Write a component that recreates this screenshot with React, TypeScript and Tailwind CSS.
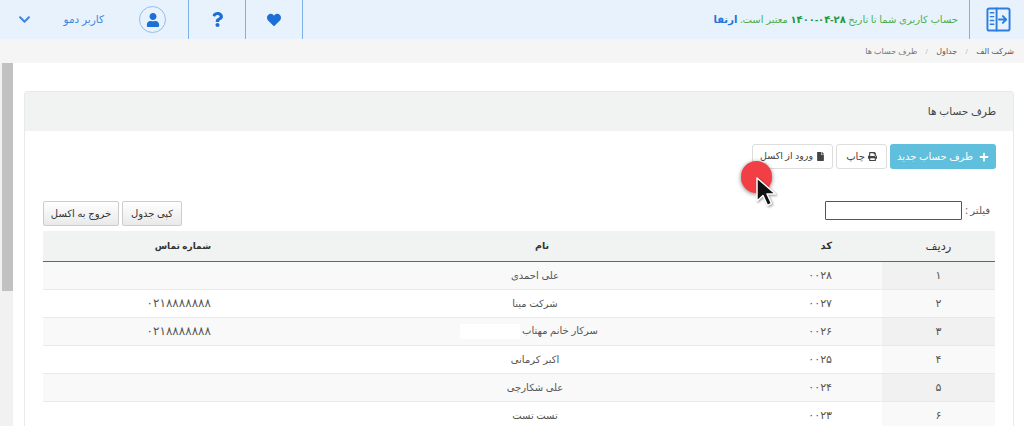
import React from "react";
import { FaHeart, FaQuestion, FaUser, FaPlus, FaPrint, FaFile, FaChevronDown } from "react-icons/fa";

const rows = [
  ["۱", "۰۰۲۸", "علی احمدی", ""],
  ["۲", "۰۰۲۷", "شرکت مینا", "۰۲۱۸۸۸۸۸۸۸"],
  ["۳", "۰۰۲۶", "سرکار خانم مهتاب", "۰۲۱۸۸۸۸۸۸۸"],
  ["۴", "۰۰۲۵", "اکبر کرمانی", ""],
  ["۵", "۰۰۲۴", "علی شکارچی", ""],
  ["۶", "۰۰۲۳", "تست تست", ""],
];

function Logo() {
  return (
    <svg width="25" height="25" viewBox="0 0 26 26" fill="none" stroke="#2b7de0" strokeWidth="2" strokeLinejoin="round" strokeLinecap="round">
      <rect x="1.5" y="1.5" width="23" height="23" rx="2" />
      <path d="M11 1.5v23" />
      <path d="M4.5 6h3.5M4.5 10h3.5M4.5 14h3.5M4.5 18h3.5" strokeWidth="1.5" />
      <path d="M13.5 13h7M17.5 9.5l3.5 3.5-3.5 3.5" />
    </svg>
  );
}

export default function App() {
  return (
    <div dir="rtl" className="w-[1024px] h-[426px] overflow-hidden bg-white font-['Open_Sans','DejaVu_Sans',sans-serif] text-[10.5px] text-[#555]">
      <header className="h-[39px] bg-[#e8f2fd] flex items-stretch">
        <div className="w-[55px] flex items-center justify-center border-l-[1.5px] border-[#7fb0ea] shrink-0 pl-[3px]">
          <Logo />
        </div>
        <div className="w-[666px] pr-[11px] flex items-center text-[10px] text-[#4caf50]">
          <span>حساب کاربری شما تا تاریخ <bdi dir="ltr" className="font-bold text-[10px] text-[#1f9a3c]">۱۴۰۰-۰۴-۲۸</bdi> معتبر است. <b className="text-[#2273d8]">ارتقا</b></span>
        </div>
        <div className="w-[57px] flex items-center justify-center border-r-[1.5px] border-[#7fb0ea] text-[#1c6fd6] text-[14px] shrink-0"><FaHeart /></div>
        <div className="w-[57px] flex items-center justify-center border-r-[1.5px] border-[#7fb0ea] text-[#1c6fd6] text-[15px] shrink-0"><FaQuestion /></div>
        <div className="flex-1 flex items-center border-r-[1.5px] border-[#7fb0ea] pr-[22px]">
          <div className="w-[27px] h-[27px] rounded-full border border-[#8fbcf0] flex items-center justify-center text-[#1c6fd6] text-[14px]"><FaUser /></div>
          <span className="mr-[35px] text-[#3f86dc] text-[10.5px]">کاربر دمو</span>
          <FaChevronDown className="mr-[33px] text-[#3f86dc] text-[13px]" />
        </div>
      </header>

      <nav className="h-[24px] bg-[#f5f5f5] flex items-center gap-[8px] pr-[10px] text-[8px] text-[#555]">
        <span>شرکت الف</span>
        <span className="text-[#bbb]">/</span>
        <span>جداول</span>
        <span className="text-[#bbb]">/</span>
        <span className="text-[#777]">طرف حساب ها</span>
      </nav>

      <div className="flex h-[363px]">
        <main className="flex-1 pt-[28px] pr-[10px] pl-[11px]">
          <section className="border border-[#e7eaec] rounded-t-[3px] h-[340px]">
            <div className="h-[39px] bg-[#f1f3f3] flex items-center pr-[17px] text-[10.5px] text-[#444]">طرف حساب ها</div>
            <div className="pt-[13px] px-[18px]">
              <div className="flex gap-[3px] h-[25px] -mr-[1px]">
                <button className="w-[106px] rounded-[3px] bg-[#5fbfdc] text-white flex items-center justify-center gap-[6px] text-[10px]"><FaPlus className="text-[10px]" />طرف حساب جدید</button>
                <button className="w-[51px] rounded-[3px] border border-[#ddd] bg-white flex items-center justify-center gap-[3px] text-[#444] text-[10px]"><FaPrint className="text-[9px]" />چاپ</button>
                <button className="w-[81px] rounded-[3px] border border-[#ddd] bg-white flex items-center justify-center gap-[3px] text-[#444] text-[9.5px]"><FaFile className="text-[9px]" />ورود از اکسل</button>
              </div>
              <div className="flex items-center justify-between mt-[31px] h-[26px]">
                <label className="flex items-center gap-[1px] pr-[5px] text-[10px] mb-[5px]">
                  <span className="w-[27px]">فیلتر :</span>
                  <span className="block w-[137px] h-[19px] border-[1.5px] border-[#555] bg-white rounded-[1px]" />
                </label>
                <div className="flex gap-[3px]">
                  <button className="w-[60px] h-[25px] rounded-[2px] border border-[#ccc] bg-gradient-to-b from-white to-[#e9e9e9] text-[#333] text-[10px]">کپی جدول</button>
                  <button className="w-[76px] h-[25px] rounded-[2px] border border-[#ccc] bg-gradient-to-b from-white to-[#e9e9e9] text-[#333] text-[10px]">خروج به اکسل</button>
                </div>
              </div>
              <table className="w-[952px] table-fixed border-collapse mt-[5px] text-[10px]">
                <colgroup>
                  <col className="w-[113px]" />
                  <col className="w-[172px]" />
                  <col className="w-[350px]" />
                  <col />
                </colgroup>
                <thead>
                  <tr className="h-[30px] bg-[#f1f3f3] border-b border-[#666] text-[#333]">
                    <th className="font-normal text-[11.5px] text-center">ردیف</th>
                    <th className="font-bold text-[10px] text-right pr-[50px]">کد</th>
                    <th className="font-bold text-[9.5px] text-center pl-[14px]">نام</th>
                    <th className="font-bold text-[9px] text-right pr-[149px]">شماره تماس</th>
                  </tr>
                </thead>
                <tbody>
                  {rows.map((r, i) => (
                    <tr key={i} className={i % 2 === 0 ? "h-[28px] bg-[#f9f9f9] border-b border-[#e9e9e9]" : "h-[28px] bg-white border-b border-[#e9e9e9]"}>
                      <td className={i % 2 === 0 ? "text-center text-[11px] bg-[#f1f1f1]" : "text-center text-[11px] bg-[#f9f9f9]"}>{r[0]}</td>
                      <td className="text-right text-[11px] pr-[50px]">{r[1]}</td>
                      <td className={i === 2 ? "text-center pr-[12px]" : "text-center"}>
                        {r[2]}
                        {i === 2 && <span className="inline-block align-middle w-[60px] h-[15px] bg-white mr-[2px]" />}
                      </td>
                      <td className="text-right text-[12px] pr-[149px]">{r[3]}</td>
                    </tr>
                  ))}
                </tbody>
              </table>
            </div>
          </section>
        </main>
        <aside className="w-[13px] bg-[#f1f1f1] shrink-0 pl-[1px]">
          <div className="h-[228px] w-[11px] bg-[#c1c1c1]" />
        </aside>
      </div>

      <div className="fixed left-[741px] top-[161px] w-[31px] h-[32px] rounded-full bg-[#f23f45] shadow-[0_1px_4px_rgba(0,0,0,0.5)]" />
      <svg className="fixed left-[755px] top-[176px] drop-shadow-[1px_1px_1px_rgba(0,0,0,0.4)]" width="22" height="32" viewBox="0 0 22 32">
        <path d="M2 2v23l6-5.5 4.5 10 4-2-4.5-9.5h8.5z" fill="#111" stroke="#fff" strokeWidth="1.5" strokeLinejoin="round" />
      </svg>
    </div>
  );
}
